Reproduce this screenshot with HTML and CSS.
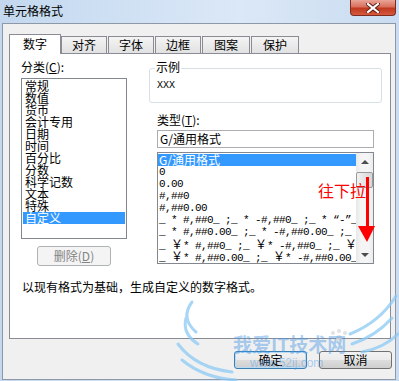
FILE: index.html
```html
<!DOCTYPE html>
<html lang="zh-CN">
<head>
    <meta charset="UTF-8">
    <title>单元格格式</title>
    <link rel="stylesheet" href="styles.css">
</head>
<body>
<div class="window">
    <div class="titlebar">
        <span class="title">单元格格式</span>
        <span class="close-btn">
            <svg width="14" height="10" viewBox="0 0 14 10">
                <path d="M2 1 L12 9 M12 1 L2 9" stroke="#5a1a12" stroke-width="4" stroke-linecap="square"/>
                <path d="M2 1 L12 9 M12 1 L2 9" stroke="#fff" stroke-width="2.2" stroke-linecap="square"/>
            </svg>
        </span>
    </div>

    <div class="client">
        <div class="tabs">
            <div class="tab active">数字</div>
            <div class="tab">对齐</div>
            <div class="tab">字体</div>
            <div class="tab">边框</div>
            <div class="tab wide">图案</div>
            <div class="tab wide">保护</div>
        </div>

        <div class="panel">
            <div class="cols">
                <div class="left-col">
                    <div class="label">分类(<u>C</u>):</div>
                    <ul class="listbox category">
                        <li>常规</li>
                        <li>数值</li>
                        <li>货币</li>
                        <li>会计专用</li>
                        <li>日期</li>
                        <li>时间</li>
                        <li>百分比</li>
                        <li>分数</li>
                        <li>科学记数</li>
                        <li>文本</li>
                        <li>特殊</li>
                        <li class="selected">自定义</li>
                    </ul>
                    <div class="btn delete-btn">删除(<u>D</u>)</div>
                </div>

                <div class="right-col">
                    <div class="group">
                        <span class="legend">示例</span>
                        <div class="sample-text">XXX</div>
                    </div>
                    <div class="label type-label">类型(<u>T</u>):</div>
                    <div class="input">G/通用格式</div>
                    <div class="listbox types">
                        <ul>
                            <li class="selected">G/通用格式</li>
                            <li class="code">0</li>
                            <li class="code">0.00</li>
                            <li class="code">#,##0</li>
                            <li class="code">#,##0.00</li>
                            <li class="code">_ * #,##0_ ;_ * -#,##0_ ;_ * “-”_ ;_ @_ </li>
                            <li class="code">_ * #,##0.00_ ;_ * -#,##0.00_ ;_ * “-”??_ ;_ @_ </li>
                            <li class="code">_ <span class="yen">￥</span>* #,##0_ ;_ <span class="yen">￥</span>* -#,##0_ ;_ <span class="yen">￥</span>* “-”_ ;_ @_ </li>
                            <li class="code">_ <span class="yen">￥</span>* #,##0.00_ ;_ <span class="yen">￥</span>* -#,##0.00_ ;_ <span class="yen">￥</span>* “-”??_ ;_ @_ </li>
                        </ul>
                        <div class="scrollbar">
                            <div class="sb-btn"><span class="arrow-up"></span></div>
                            <div class="sb-thumb"></div>
                            <div class="sb-track"></div>
                            <div class="sb-btn"><span class="arrow-down"></span></div>
                        </div>
                    </div>
                </div>
            </div>
            <p class="hint">以现有格式为基础，生成自定义的数字格式。</p>
        </div>

        <div class="buttons">
            <div class="btn default">确定</div>
            <div class="btn">取消</div>
        </div>
    </div>

    <!-- 红色标注 -->
    <div class="note">往下拉</div>
    <svg class="note-arrow" width="18" height="68" viewBox="0 0 18 68">
        <rect x="9" y="1" width="3" height="51" fill="#f00"/>
        <polygon points="1,50 18,50 10,66" fill="#f00"/>
    </svg>

    <!-- 水印 -->
    <svg class="wings" width="399" height="381" viewBox="0 0 399 381">
        <g fill="none" stroke="#8ccaf4" stroke-width="3" stroke-linecap="round" opacity="0.75">
            <path d="M192 302 Q180 318 196 332"/>
            <path d="M186 318 Q182 334 198 344"/>
            <path d="M178 344 Q196 368 232 372"/>
            <path d="M182 360 Q204 378 236 380"/>
            <path d="M396 296 Q380 322 350 334"/>
            <path d="M392 318 Q376 336 352 344"/>
            <path d="M398 334 Q384 348 362 352"/>
        </g>
        <g fill="#dcdcdc" opacity="0.8">
            <circle cx="333" cy="333" r="2"/>
            <circle cx="339" cy="331" r="2"/>
            <circle cx="345" cy="333" r="2"/>
            <circle cx="339" cy="338" r="3"/>
        </g>
    </svg>
    <div class="watermark">我爱IT技术网</div>
    <div class="watermark-url">www.52ij.com</div>
</div>
</body>
</html>
```

FILE: styles.css
```css
body {
    margin: 0;
    font-family: "Noto Sans CJK SC", sans-serif;
    font-size: 12px;
    color: #000;
}
ul {
    list-style: none;
    margin: 0;
    padding: 0;
}
u {
    text-decoration: underline;
}

/* 窗口外框 */
.window {
    position: relative;
    width: 399px;
    height: 381px;
    box-sizing: border-box;
    padding: 0 3px 1px 2px;
    display: flex;
    flex-direction: column;
    overflow: hidden;
    background: linear-gradient(90deg, #c3d8ef 0%, #d3e3f5 40%, #dbe8f6 60%, #c9dcf1 100%);
}
.titlebar {
    height: 23px;
    display: flex;
    justify-content: space-between;
    align-items: flex-start;
}
.title {
    padding: 3px 0 0 1px;
    line-height: 16px;
    font-size: 12px;
}
.close-btn {
    width: 46px;
    height: 16px;
    box-sizing: border-box;
    display: flex;
    align-items: center;
    justify-content: center;
    border: 1px solid #7d2b20;
    border-top: none;
    border-radius: 0 0 4px 4px;
    background: linear-gradient(#e9a597 0%, #d9705c 45%, #c0391f 55%, #d55a3e 100%);
}

/* 客户区 */
.client {
    flex: 1;
    display: flex;
    flex-direction: column;
    border: 1px solid #8d99a8;
    background: #f0f0f0;
}
.tabs {
    display: flex;
    align-items: flex-end;
    height: 20px;
    margin: 10px 0 -1px 6px;
    position: relative;
    z-index: 1;
}
.tab {
    width: 46px;
    height: 17px;
    box-sizing: border-box;
    margin: 0 0 1px 1px;
    padding-top: 1px;
    border: 1px solid #898c95;
    border-bottom: none;
    text-align: center;
    line-height: 14px;
    background: linear-gradient(#f4f4f4, #e1e1e1);
}
.tab.wide {
    width: 48px;
}
.tab.active {
    width: 52px;
    height: 20px;
    margin: 0;
    padding-top: 2px;
    background: #fff;
}
.tab.active + .tab {
    margin-left: 0;
}

.panel {
    height: 286px;
    box-sizing: border-box;
    margin: 0 4px 0 6px;
    border: 1px solid #898c95;
    background: #fff;
}
.cols {
    display: flex;
}
.label {
    height: 12px;
    line-height: 12px;
}
.left-col {
    width: 106px;
    padding: 7px 0 0 11px;
}
.listbox {
    box-sizing: border-box;
    border: 1px solid #828790;
    background: #fff;
}
.listbox li {
    height: 12px;
    line-height: 12px;
    white-space: pre;
}
.listbox li.selected {
    background: #3399ff;
    color: #fff;
}
.category {
    height: 161px;
    margin-top: 5px;
    padding: 1px 1px 0 1px;
}
.category li {
    padding-left: 2px;
}

.btn {
    width: 73px;
    height: 18px;
    box-sizing: border-box;
    border: 1px solid #707070;
    border-radius: 3px;
    text-align: center;
    line-height: 16px;
    background: linear-gradient(#f2f2f2 0%, #ebebeb 50%, #dddddd 51%, #cfcfcf 100%);
}
.btn.default {
    border-color: #3c7fb1;
    box-shadow: inset 0 0 0 1px #b9dcf4;
}
.delete-btn {
    width: 74px;
    height: 20px;
    line-height: 18px;
    margin: 7px 0 0 16px;
    border-color: #adb2b5;
    background: #f4f4f4;
    color: #838383;
}

.right-col {
    width: 233px;
    margin-left: 22px;
    padding-top: 14px;
}
.group {
    position: relative;
    height: 35px;
    box-sizing: border-box;
    border: 1px solid #d5dfe5;
    border-radius: 3px;
}
.legend {
    position: absolute;
    top: -8px;
    left: 5px;
    padding: 0 1px;
    line-height: 12px;
    background: #fff;
}
.sample-text {
    padding: 12px 0 0 7px;
    font-family: "Liberation Mono", monospace;
    font-size: 10px;
    line-height: 10px;
}
.type-label {
    margin: 11px 0 0 8px;
}
.input {
    width: 217px;
    height: 18px;
    box-sizing: border-box;
    margin: 4px 0 0 8px;
    padding-left: 2px;
    border: 1px solid #abadb3;
    line-height: 16px;
}
.types {
    width: 217px;
    height: 112px;
    margin: 4px 0 0 8px;
    display: flex;
}
.types ul {
    flex: 1;
    padding-top: 1px;
    overflow: hidden;
}
.types li {
    padding-left: 1px;
}
.types li.code {
    font-family: "Liberation Mono", "Noto Sans CJK SC", monospace;
    font-size: 11px;
    letter-spacing: -0.6px;
}
.types .yen {
    font-family: "Noto Sans CJK SC", sans-serif;
    font-size: 12px;
    letter-spacing: 0;
}
.scrollbar {
    width: 17px;
    display: flex;
    flex-direction: column;
    background: linear-gradient(90deg, #e8e8e8, #f5f5f5 30%, #f5f5f5 70%, #ececec);
}
.sb-btn {
    height: 17px;
    display: flex;
    align-items: center;
    justify-content: center;
}
.arrow-up, .arrow-down {
    width: 0;
    height: 0;
    border-left: 4px solid transparent;
    border-right: 4px solid transparent;
}
.arrow-up {
    border-bottom: 4px solid #4d4d4d;
}
.arrow-down {
    border-top: 4px solid #4d4d4d;
}
.sb-thumb {
    height: 16px;
    margin: 2px 0 0 0;
    box-sizing: border-box;
    border: 1px solid #9a9a9a;
    border-radius: 2px;
    background: linear-gradient(90deg, #f2f2f2, #e4e4e4 50%, #d6d6d6);
}
.sb-track {
    flex: 1;
}

.hint {
    margin: 14px 0 0 0;
    padding-left: 12px;
    line-height: 13px;
}

.buttons {
    display: flex;
    justify-content: flex-end;
    gap: 12px;
    margin-top: 12px;
    padding-right: 3px;
}

/* 标注和水印 */
.note {
    position: absolute;
    left: 318px;
    top: 180px;
    font-size: 16px;
    line-height: 20px;
    color: #f00;
}
.note-arrow {
    position: absolute;
    left: 357px;
    top: 176px;
}
.wings {
    position: absolute;
    left: 0;
    top: 0;
    pointer-events: none;
}
.watermark {
    position: absolute;
    left: 233px;
    top: 332px;
    font-size: 19px;
    font-weight: bold;
    line-height: 24px;
    color: rgba(70, 150, 230, 0.45);
}
.watermark-url {
    position: absolute;
    left: 250px;
    top: 356px;
    font-family: "Liberation Sans", sans-serif;
    font-size: 12px;
    line-height: 14px;
    color: rgba(90, 165, 235, 0.5);
}
```
